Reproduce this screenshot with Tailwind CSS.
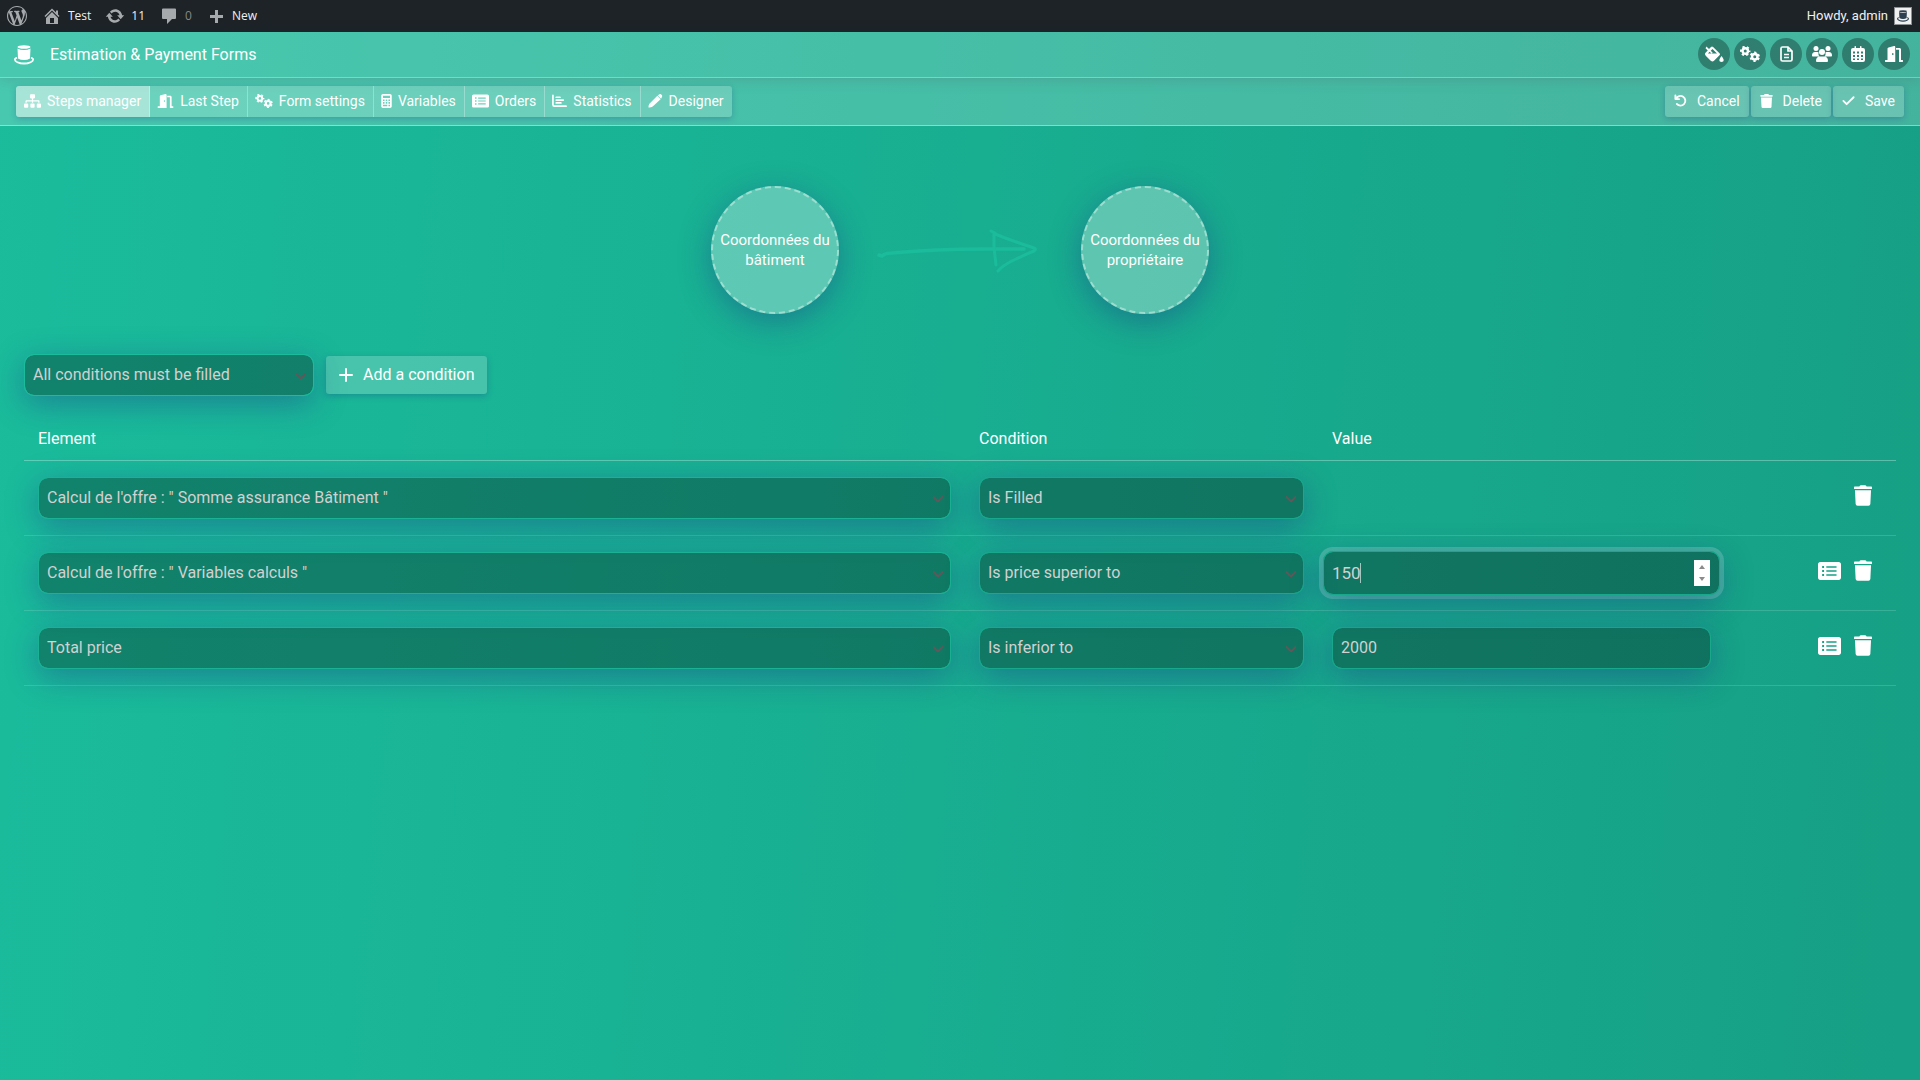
<!DOCTYPE html>
<html lang="en">
<head>
    <meta charset="UTF-8">
    <meta name="viewport" content="width=device-width, initial-scale=1.0">
    <title>Estimation &amp; Payment Forms</title>

    <!-- Tailwind CSS -->
    <script src="https://cdn.jsdelivr.net/npm/@tailwindcss/browser@4"></script>
</head>
<body class="min-h-screen bg-linear-[95deg,#1abc9c,#16a085] font-[Roboto,sans-serif] text-white">

    <!-- Icon sprite -->
    <svg class="hidden">
        <symbol id="sitemap" viewBox="0 0 640 512"><path d="M128 352H32c-17.67 0-32 14.33-32 32v96c0 17.67 14.33 32 32 32h96c17.67 0 32-14.33 32-32v-96c0-17.67-14.33-32-32-32zm-24-80h192v48h48v-48h192v48h48v-57.59c0-21.17-17.23-38.41-38.41-38.41H344v-64h40c17.67 0 32-14.33 32-32V32c0-17.67-14.33-32-32-32H256c-17.67 0-32 14.33-32 32v96c0 17.67 14.33 32 32 32h40v64H94.41C73.23 224 56 241.23 56 262.41V320h48v-48zm264 80h-96c-17.67 0-32 14.33-32 32v96c0 17.67 14.33 32 32 32h96c17.67 0 32-14.33 32-32v-96c0-17.67-14.33-32-32-32zm240 0h-96c-17.67 0-32 14.33-32 32v96c0 17.67 14.33 32 32 32h96c17.67 0 32-14.33 32-32v-96c0-17.67-14.33-32-32-32z"/></symbol>
        <symbol id="door" viewBox="0 0 576 512"><path fill-rule="evenodd" d="M560 448h-48V113.450C512 86.190 490.500 64 464 64H352v56h96v392h112c8.840 0 16-7.160 16-16v-32c0-8.840-7.160-16-16-16zM290 1L112 45C98 49 80 62 80 82.900V448H16c-8.840 0-16 7.160-16 16v32c0 8.840 7.160 16 16 16h312V33.180C328 11.600 310-4 290 1zM250 288c-13.250 0-24-14.330-24-32s10.750-32 24-32 24 14.330 24 32-10.750 32-24 32z"/></symbol>
        <symbol id="cogs" viewBox="0 0 40 32">
            <g fill="none" stroke="currentColor">
                <circle cx="10.500" cy="10" r="5.400" stroke-width="4.800"/>
                <circle cx="10.500" cy="10" r="8.400" stroke-width="4" stroke-dasharray="4.400 4.400" stroke-dashoffset="2.200"/>
                <circle cx="29.500" cy="21.500" r="5.400" stroke-width="4.800"/>
                <circle cx="29.500" cy="21.500" r="8.400" stroke-width="4" stroke-dasharray="4.400 4.400" stroke-dashoffset="6.600"/>
            </g>
        </symbol>
        <symbol id="calculator" viewBox="0 0 384 512"><path fill-rule="evenodd" d="M64 0h256c35 0 64 29 64 64v384c0 35-29 64-64 64H64c-35 0-64-29-64-64V64C0 29 29 0 64 0zM64 64v80h256V64zM64 200v56h56v-56zM164 200v56h56v-56zM264 200v56h56v-56zM64 296v56h56v-56zM164 296v56h56v-56zM264 296v56h56v-56zM64 392v56h156v-56zM264 392v56h56v-56z"/></symbol>
        <symbol id="list" viewBox="0 0 576 448"><path fill-rule="evenodd" d="M56 0h464c31 0 56 25 56 56v336c0 31-25 56-56 56H56c-31 0-56-25-56-56V56C0 25 25 0 56 0zM104 100v48h48v-48zM104 200v48h48v-48zM104 300v48h48v-48zM208 104v40h256v-40zM208 204v40h256v-40zM208 304v40h256v-40z"/></symbol>
        <symbol id="chart" viewBox="0 0 32 28"><path d="M2 2v20q0 3 3 3h25M9 6h8M9 12h15M9 18h10" fill="none" stroke="currentColor" stroke-width="3.600" stroke-linecap="round"/></symbol>
        <symbol id="pencil" viewBox="0 0 32 30"><path d="M1 29q-.5-4 2-8L20 4l7 7L10 27q-4 2.500-9 2zM21 3l2.500-2q3-2 5.500.500t.5 5.500L28 10z"/></symbol>
        <symbol id="trash" viewBox="0 0 448 512"><path d="M432 32H312l-9.400-18.700A24 24 0 0 0 281.100 0H166.800a23.720 23.720 0 0 0-21.400 13.300L136 32H16A16 16 0 0 0 0 48v32a16 16 0 0 0 16 16h416a16 16 0 0 0 16-16V48a16 16 0 0 0-16-16zM41 467a48 48 0 0 0 47.900 45h270.200a48 48 0 0 0 47.900-45L424 128H24z"/></symbol>
        <symbol id="undo" viewBox="0 0 28 28"><path d="M3 3v8h8M4.500 10A10.500 10.500 0 1 1 6 21.500" fill="none" stroke="currentColor" stroke-width="4" stroke-linecap="round" stroke-linejoin="round"/></symbol>
        <symbol id="check" viewBox="0 0 28 28"><path d="M3 15l7 7L25 7" fill="none" stroke="currentColor" stroke-width="4" stroke-linecap="round" stroke-linejoin="round"/></symbol>
        <symbol id="plus" viewBox="0 0 28 28"><path d="M14 2v24M2 14h24" fill="none" stroke="currentColor" stroke-width="4" stroke-linecap="round"/></symbol>
        <symbol id="fill" viewBox="0 0 40 32"><path fill-rule="evenodd" d="M5 1l5 5 4-4q2-2 4.200 0L31 14.500q2 2 0 4L20 29.500q-3 3-6.500 0l-10-10q-3-3.500 0-6.500l4-4L3 4.500zM8 15h18L17 6l-3.500 3.500 4 4-2.500 1.500-4-3.500z"/><path d="M35 20q4.500 5.500 4.500 8a4.500 4 0 0 1-9 0q0-2.500 4.500-8z"/></symbol>
        <symbol id="file" viewBox="0 0 26 32"><path d="M2 5q0-3 3-3h11l8 8v17q0 3-3 3H5q-3 0-3-3zM16 2v8h8M8 17h10M8 23h10" fill="none" stroke="currentColor" stroke-width="3.400"/></symbol>
        <symbol id="users" viewBox="0 0 40 32"><circle cx="8" cy="5" r="5"/><circle cx="32" cy="5" r="5"/><circle cx="20" cy="12" r="6"/><path d="M0 19q0-7 6-7h5q1 0 2 .5-1 5 2 8.500H1.500Q0 21 0 19zM40 19q0-7-6-7h-5q-1 0-2 .5 1 5-2 8.500h13.500q1.500 0 1.500-2zM8 30q0-9 8-9h8q8 0 8 9 0 2-2 2H10q-2 0-2-2z"/></symbol>
        <symbol id="calendar" viewBox="0 0 28 32"><path fill-rule="evenodd" d="M4 4h3V1.500q0-1.500 1.500-1.500T10 1.500V4h8V1.500Q18 0 19.500 0T21 1.500V4h3q4 0 4 4v20q0 4-4 4H4q-4 0-4-4V8q0-4 4-4zM4 11v4h4v-4zM12 11v4h4v-4zM20 11v4h4v-4zM4 18v4h4v-4zM12 18v4h4v-4zM20 18v4h4v-4zM4 25v3h4v-3zM12 25v3h4v-3zM20 25v3h4v-3z"/></symbol>
        <symbol id="hat" viewBox="0 0 40 40"><ellipse cx="20" cy="4" rx="13" ry="3.500"/><path d="M7 7q6 3 13 3t13-3l-1 20q-5 3-12 3T8 27z"/><path d="M6 24q-6 1-6 5 0 4 6 7t14 3 14-3 6-7q0-4-6-5l-.5 3q5 2 2 4-5 4-15.500 4T4.500 31q-3-2 2-4z"/></symbol>
        <symbol id="chevron" viewBox="0 0 10 6"><path d="M0 .5l5 5 5-5" fill="none" stroke="currentColor" stroke-width="1.800"/></symbol>
    </svg>

    <!-- Admin bar -->
    <header class="flex h-8 items-center justify-between bg-[#1d2327] text-[13px] text-[#f0f0f1]">
        <nav class="flex h-full items-center font-['Open_Sans',sans-serif] text-xs">
            <a href="#" class="pr-2 pl-[7px]" aria-label="WordPress">
                <svg class="size-5 text-[#a7aaad]" viewBox="0 0 20 20" fill="currentColor"><path d="M20 10c0-5.510-4.490-10-10-10C4.480 0 0 4.490 0 10c0 5.520 4.480 10 10 10 5.510 0 10-4.480 10-10zM7.780 15.370L4.370 6.220c.55-.02 1.170-.08 1.170-.08.5-.06.44-1.130-.06-1.110 0 0-1.450.11-2.370.11-.18 0-.37 0-.58-.01C4.120 2.690 6.870 1.110 10 1.110c2.330 0 4.450.87 6.050 2.340-.68-.11-1.650.39-1.650 1.580 0 .74.45 1.360.9 2.100.35.61.55 1.360.55 2.460 0 1.490-1.400 5-1.400 5l-3.030-8.370c.54-.02.82-.17.82-.17.5-.05.44-1.250-.06-1.220 0 0-1.440.12-2.380.12-.87 0-2.330-.12-2.330-.12-.5-.03-.56 1.200-.06 1.220l.92.08 1.260 3.410zM17.410 10c.24-.64.74-1.870.43-4.250.7 1.290 1.050 2.710 1.050 4.250 0 3.290-1.730 6.240-4.400 7.780.97-2.590 1.940-5.200 2.920-7.780zM6.100 18.090C3.120 16.650 1.110 13.530 1.110 10c0-1.300.23-2.480.72-3.590C3.250 10.300 4.670 14.200 6.100 18.090zm4.030-6.630l2.580 6.980c-.86.29-1.760.45-2.710.45-.79 0-1.570-.11-2.290-.33.81-2.380 1.620-4.740 2.420-7.100z"/></svg>
            </a>
            <a href="#" class="flex items-center gap-1.5 px-[7px]">
                <svg class="size-5 text-[#a7aaad]" viewBox="0 0 20 20" fill="currentColor"><path d="M16 8.500l1.530 1.530-1.060 1.060L10 4.600l-6.470 6.490-1.060-1.060L10 2.500l4 4v-2h2v4zm-6-2.460l6 5.990V18H4v-5.970zM12 17v-5H8v5h4z"/></svg>
                Test
            </a>
            <a href="#" class="flex items-center gap-1.5 px-[7px]">
                <svg class="size-5 text-[#a7aaad]" viewBox="0 0 20 20" fill="currentColor"><path d="M10.200 3.280c3.530 0 6.430 2.610 6.920 6h2.080l-3.500 4-3.500-4h2.320c-.45-1.970-2.210-3.450-4.320-3.450-1.450 0-2.730.71-3.540 1.780L4.950 5.660C6.230 4.200 8.110 3.280 10.200 3.280zm-.4 13.440c-3.520 0-6.430-2.610-6.920-6H.8l3.500-4c1.170 1.330 2.330 2.670 3.500 4H5.480c.45 1.970 2.210 3.450 4.320 3.450 1.450 0 2.730-.71 3.540-1.780l1.710 1.950c-1.280 1.460-3.150 2.380-5.250 2.380z"/></svg>
                11
            </a>
            <a href="#" class="flex items-center gap-1.5 px-[7px] text-[#85888b]">
                <svg class="size-5 text-[#a7aaad]" viewBox="0 0 20 20" fill="currentColor"><path d="M4 2.500h12q1 0 1 1V12q0 1-1 1h-3l-5 5v-5H4q-1 0-1-1V3.500q0-1 1-1z"/></svg>
                0
            </a>
            <a href="#" class="flex items-center gap-1.5 px-[7px]">
                <svg class="size-5 text-[#a7aaad]" viewBox="0 0 20 20" fill="currentColor"><path d="M17 9v3h-5v5H9v-5H4V9h5V4h3v5h5z"/></svg>
                New
            </a>
        </nav>
        <a href="#" class="flex items-center gap-1.5 px-2">
            Howdy, admin
            <svg class="size-[18px] border border-[#8c8f94] bg-[#f0f0f1] fill-[#2c3e50] p-0.5"><use href="#hat"/></svg>
        </a>
    </header>

    <!-- Title bar -->
    <div class="flex h-[46px] items-center justify-between border-b border-white/30 bg-white/20 pr-2.5 pl-3.5 shadow-[0_2px_12px_0_rgba(30,60,70,0.25)]">
        <h1 class="flex items-center gap-4 text-base">
            <svg class="size-5 fill-current"><use href="#hat"/></svg>
            Estimation &amp; Payment Forms
        </h1>
        <div class="flex gap-1 pb-0.5">
            <button aria-label="Colors" class="flex size-8 items-center justify-center rounded-full bg-black/30"><svg class="h-4 w-5 fill-current"><use href="#fill"/></svg></button>
            <button aria-label="Settings" class="flex size-8 items-center justify-center rounded-full bg-black/30"><svg class="h-4 w-5"><use href="#cogs"/></svg></button>
            <button aria-label="Forms" class="flex size-8 items-center justify-center rounded-full bg-black/30"><svg class="h-4 w-[13px]"><use href="#file"/></svg></button>
            <button aria-label="Customers" class="flex size-8 items-center justify-center rounded-full bg-black/30"><svg class="h-4 w-5 fill-current"><use href="#users"/></svg></button>
            <button aria-label="Calendars" class="flex size-8 items-center justify-center rounded-full bg-black/30"><svg class="h-4 w-4 fill-current"><use href="#calendar"/></svg></button>
            <button aria-label="Exit" class="flex size-8 items-center justify-center rounded-full bg-black/30"><svg class="h-4 w-5 fill-current"><use href="#door"/></svg></button>
        </div>
    </div>

    <!-- Toolbar -->
    <div class="flex h-12 items-center justify-between border-b border-white/40 bg-white/20 px-4 text-sm">
        <div class="flex h-[31px] divide-x divide-white/30 overflow-hidden rounded-[3px] bg-white/20 shadow-[0_2px_6px_0_rgba(31,38,135,0.25)]">
            <button class="flex items-center gap-1.5 bg-white/40 px-2 pb-0.5"><svg class="h-3.5 w-[17px] fill-current"><use href="#sitemap"/></svg>Steps manager</button>
            <button class="flex items-center gap-1.5 pr-2 pb-0.5 pl-[7px]"><svg class="h-3.5 w-[17px] fill-current"><use href="#door"/></svg>Last Step</button>
            <button class="flex items-center gap-1.5 pr-2 pb-0.5 pl-[7px]"><svg class="h-3.5 w-[18px]"><use href="#cogs"/></svg>Form settings</button>
            <button class="flex items-center gap-1.5 pr-2 pb-0.5 pl-[7px]"><svg class="h-3.5 w-[11px] fill-current"><use href="#calculator"/></svg>Variables</button>
            <button class="flex items-center gap-1.5 pr-2 pb-0.5 pl-[7px]"><svg class="h-3.5 w-[17px] fill-current"><use href="#list"/></svg>Orders</button>
            <button class="flex items-center gap-1.5 pr-2 pb-0.5 pl-[7px]"><svg class="h-3.5 w-[15px]"><use href="#chart"/></svg>Statistics</button>
            <button class="flex items-center gap-1.5 pr-2 pb-0.5 pl-[7px]"><svg class="h-3.5 w-[15px] fill-current"><use href="#pencil"/></svg>Designer</button>
        </div>
        <div class="flex gap-0.5">
            <button class="flex h-[31px] items-center gap-2.5 rounded-[3px] bg-white/20 px-[9px] pb-0.5 shadow-[0_2px_6px_0_rgba(31,38,135,0.25)]"><svg class="size-[13px]"><use href="#undo"/></svg>Cancel</button>
            <button class="flex h-[31px] items-center gap-2.5 rounded-[3px] bg-white/20 px-[9px] pb-0.5 shadow-[0_2px_6px_0_rgba(31,38,135,0.25)]"><svg class="h-3.5 w-[13px] fill-current"><use href="#trash"/></svg>Delete</button>
            <button class="flex h-[31px] items-center gap-2.5 rounded-[3px] bg-white/20 px-[9px] pb-0.5 shadow-[0_2px_6px_0_rgba(31,38,135,0.25)]"><svg class="size-[13px]"><use href="#check"/></svg>Save</button>
        </div>
    </div>

    <main class="px-6 pt-[60px]">
        <!-- Linked steps -->
        <div class="flex items-center justify-center gap-[38px] text-[15px] leading-5">
            <div class="flex size-32 items-center justify-center rounded-full border-2 border-dashed border-white/40 bg-white/30 text-center shadow-[0_8px_32px_0_rgba(31,38,135,0.37)]">Coordonnées du<br>bâtiment</div>
            <svg class="h-12 w-[166px]" viewBox="0 0 166 48" fill="none" stroke="#1abc9c" stroke-width="3" stroke-linecap="round" stroke-linejoin="round">
                <path d="M2 29l3 1q3-3 10-3 45-4 90-4h42" stroke-width="3.500"/>
                <path d="M114 5l4 2M118 8q20 8 39 14 3 1 0 3-12 5-22 10-10 5-14 10M117 8l0 14 2 17"/>
            </svg>
            <div class="flex size-32 items-center justify-center rounded-full border-2 border-dashed border-white/40 bg-white/30 text-center shadow-[0_8px_32px_0_rgba(31,38,135,0.37)]">Coordonnées du<br>propriétaire</div>
        </div>

        <!-- Conditions operator -->
        <div class="mt-10 flex items-center gap-3">
            <div class="relative w-[290px]">
                <select aria-label="Operator" class="h-[42px] w-full appearance-none rounded-[10px] border border-[#1abc9c] bg-black/30 bg-clip-padding px-2 text-[#d1d1d1] shadow-[0_8px_32px_0_rgba(31,38,135,0.37)]"><option>All conditions must be filled</option></select>
                <svg class="pointer-events-none absolute top-[19px] right-2 h-1.5 w-2.5 text-[#66565a]"><use href="#chevron"/></svg>
            </div>
            <button class="flex h-[38px] items-center gap-2.5 rounded-[3px] bg-white/20 px-[13px] shadow-[0_2px_6px_0_rgba(31,38,135,0.25)]"><svg class="size-3.5"><use href="#plus"/></svg>Add a condition</button>
        </div>

        <!-- Conditions table -->
        <table class="mt-5 w-full table-fixed">
            <thead>
                <tr class="h-11 border-b border-white/30 text-left">
                    <th class="px-3.5 pt-0.5 font-normal">Element</th>
                    <th class="w-[353px] px-3.5 pt-0.5 font-normal">Condition</th>
                    <th class="w-[407px] px-3.5 pt-0.5 font-normal">Value</th>
                    <th class="w-[171px]"></th>
                </tr>
            </thead>
            <tbody>
                <tr class="h-[75px] border-b border-white/15">
                    <td class="px-3.5">
                        <div class="relative">
                            <select aria-label="Element" class="block h-[42px] w-full appearance-none rounded-[10px] border border-[#1ab194] bg-black/30 bg-clip-padding px-2 text-[#d1d1d1] shadow-[0_8px_32px_0_rgba(31,38,135,0.37)]"><option>Calcul de l'offre : " Somme assurance Bâtiment "</option></select>
                            <svg class="pointer-events-none absolute top-[19px] right-2 h-1.5 w-2.5 text-[#66565a]"><use href="#chevron"/></svg>
                        </div>
                    </td>
                    <td class="px-3.5">
                        <div class="relative">
                            <select aria-label="Condition" class="block h-[42px] w-full appearance-none rounded-[10px] border border-[#18a88c] bg-black/30 bg-clip-padding px-2 text-[#d1d1d1] shadow-[0_8px_32px_0_rgba(31,38,135,0.37)]"><option>Is Filled</option></select>
                            <svg class="pointer-events-none absolute top-[19px] right-2 h-1.5 w-2.5 text-[#66565a]"><use href="#chevron"/></svg>
                        </div>
                    </td>
                    <td></td>
                    <td class="pr-6 pb-1">
                        <div class="flex items-center justify-end gap-[13px]">
                            <button aria-label="Delete condition"><svg class="h-[21px] w-[18px] fill-current"><use href="#trash"/></svg></button>
                        </div>
                    </td>
                </tr>
                <tr class="h-[75px] border-b border-white/15">
                    <td class="px-3.5">
                        <div class="relative">
                            <select aria-label="Element" class="block h-[42px] w-full appearance-none rounded-[10px] border border-[#1ab194] bg-black/30 bg-clip-padding px-2 text-[#d1d1d1] shadow-[0_8px_32px_0_rgba(31,38,135,0.37)]"><option>Calcul de l'offre : " Variables calculs "</option></select>
                            <svg class="pointer-events-none absolute top-[19px] right-2 h-1.5 w-2.5 text-[#66565a]"><use href="#chevron"/></svg>
                        </div>
                    </td>
                    <td class="px-3.5">
                        <div class="relative">
                            <select aria-label="Condition" class="block h-[42px] w-full appearance-none rounded-[10px] border border-[#18a88c] bg-black/30 bg-clip-padding px-2 text-[#d1d1d1] shadow-[0_8px_32px_0_rgba(31,38,135,0.37)]"><option>Is price superior to</option></select>
                            <svg class="pointer-events-none absolute top-[19px] right-2 h-1.5 w-2.5 text-[#66565a]"><use href="#chevron"/></svg>
                        </div>
                    </td>
                    <td class="px-[5px]">
                        <div class="relative">
                            <input type="text" inputmode="numeric" aria-label="Value" value="150" class="block h-11 w-full rounded-[10px] border border-[#18a88c] bg-black/30 bg-clip-padding px-2 text-[17px] text-[#d1d1d1] shadow-[0_8px_32px_0_rgba(31,38,135,0.37),0_0_0_4px_rgba(255,255,255,0.2)]">
                            <span class="absolute top-3 left-[37px] h-5 w-px bg-white/60"></span>
                            <span class="absolute top-[9px] right-2.5 flex h-[26px] w-4 flex-col items-center justify-between bg-white py-[5px] text-[#8b8b8b]">
                                <svg class="h-1 w-1.5 fill-current" viewBox="0 0 6 4"><path d="M0 4l3-4 3 4z"/></svg>
                                <svg class="h-1 w-1.5 fill-current" viewBox="0 0 6 4"><path d="M0 0l3 4 3-4z"/></svg>
                            </span>
                        </div>
                    </td>
                    <td class="pr-6 pb-1">
                        <div class="flex items-center justify-end gap-[13px]">
                            <button aria-label="Pick a value"><svg class="h-[18px] w-[23px] fill-current"><use href="#list"/></svg></button>
                            <button aria-label="Delete condition"><svg class="h-[21px] w-[18px] fill-current"><use href="#trash"/></svg></button>
                        </div>
                    </td>
                </tr>
                <tr class="h-[75px] border-b border-white/15">
                    <td class="px-3.5">
                        <div class="relative">
                            <select aria-label="Element" class="block h-[42px] w-full appearance-none rounded-[10px] border border-[#1ab194] bg-black/30 bg-clip-padding px-2 text-[#d1d1d1] shadow-[0_8px_32px_0_rgba(31,38,135,0.37)]"><option>Total price</option></select>
                            <svg class="pointer-events-none absolute top-[19px] right-2 h-1.5 w-2.5 text-[#66565a]"><use href="#chevron"/></svg>
                        </div>
                    </td>
                    <td class="px-3.5">
                        <div class="relative">
                            <select aria-label="Condition" class="block h-[42px] w-full appearance-none rounded-[10px] border border-[#18a88c] bg-black/30 bg-clip-padding px-2 text-[#d1d1d1] shadow-[0_8px_32px_0_rgba(31,38,135,0.37)]"><option>Is inferior to</option></select>
                            <svg class="pointer-events-none absolute top-[19px] right-2 h-1.5 w-2.5 text-[#66565a]"><use href="#chevron"/></svg>
                        </div>
                    </td>
                    <td class="px-3.5">
                        <input type="text" inputmode="numeric" aria-label="Value" value="2000" class="block h-[42px] w-full rounded-[10px] border border-[#18a88c] bg-black/30 bg-clip-padding px-2 text-[#d1d1d1] shadow-[0_8px_32px_0_rgba(31,38,135,0.37)]">
                    </td>
                    <td class="pr-6 pb-1">
                        <div class="flex items-center justify-end gap-[13px]">
                            <button aria-label="Pick a value"><svg class="h-[18px] w-[23px] fill-current"><use href="#list"/></svg></button>
                            <button aria-label="Delete condition"><svg class="h-[21px] w-[18px] fill-current"><use href="#trash"/></svg></button>
                        </div>
                    </td>
                </tr>
            </tbody>
        </table>
    </main>
</body>
</html>
